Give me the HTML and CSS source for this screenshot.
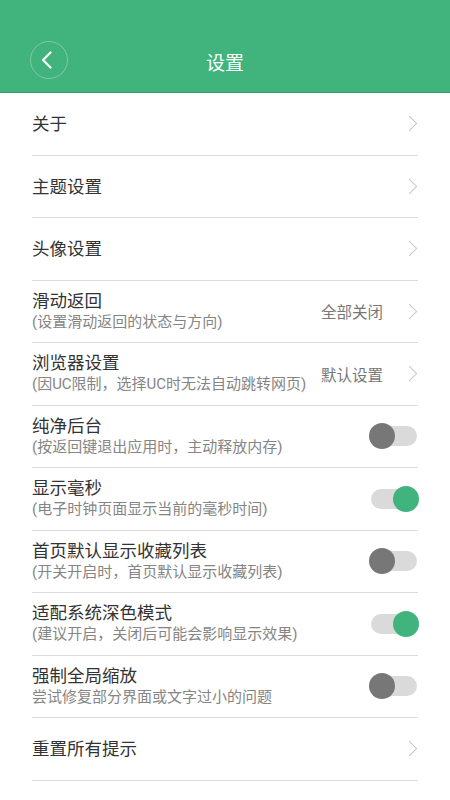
FILE: index.html
```html
<!DOCTYPE html>
<html lang="zh">
<head>
    <meta charset="UTF-8">
    <meta name="viewport" content="width=device-width, initial-scale=1.0">
    <title>设置</title>
    <link rel="stylesheet" href="styles.css">
</head>
<body>
    <div class="header">
        <div class="toolbar">
            <div class="back-btn">
                <svg width="38" height="38" viewBox="0 0 38 38">
                    <polyline points="20.5,11.5 13,19 20.5,26.5" fill="none" stroke="#fff" stroke-width="2.2" stroke-linecap="round" stroke-linejoin="round"/>
                </svg>
            </div>
            <h1>设置</h1>
        </div>
    </div>

    <div class="list">
        <div class="row single">
            <div class="text"><div class="title">关于</div></div>
            <span class="arrow"></span>
        </div>
        <div class="row single">
            <div class="text"><div class="title">主题设置</div></div>
            <span class="arrow"></span>
        </div>
        <div class="row single">
            <div class="text"><div class="title">头像设置</div></div>
            <span class="arrow"></span>
        </div>
        <div class="row">
            <div class="text">
                <div class="title">滑动返回</div>
                <div class="sub">(设置滑动返回的状态与方向)</div>
            </div>
            <span class="value">全部关闭</span>
            <span class="arrow"></span>
        </div>
        <div class="row">
            <div class="text">
                <div class="title">浏览器设置</div>
                <div class="sub">(因UC限制，选择UC时无法自动跳转网页)</div>
            </div>
            <span class="value">默认设置</span>
            <span class="arrow"></span>
        </div>
        <div class="row">
            <div class="text">
                <div class="title">纯净后台</div>
                <div class="sub">(按返回键退出应用时，主动释放内存)</div>
            </div>
            <div class="switch"><span class="track"></span><span class="knob"></span></div>
        </div>
        <div class="row">
            <div class="text">
                <div class="title">显示毫秒</div>
                <div class="sub">(电子时钟页面显示当前的毫秒时间)</div>
            </div>
            <div class="switch on"><span class="track"></span><span class="knob"></span></div>
        </div>
        <div class="row">
            <div class="text">
                <div class="title">首页默认显示收藏列表</div>
                <div class="sub">(开关开启时，首页默认显示收藏列表)</div>
            </div>
            <div class="switch"><span class="track"></span><span class="knob"></span></div>
        </div>
        <div class="row">
            <div class="text">
                <div class="title">适配系统深色模式</div>
                <div class="sub">(建议开启，关闭后可能会影响显示效果)</div>
            </div>
            <div class="switch on"><span class="track"></span><span class="knob"></span></div>
        </div>
        <div class="row">
            <div class="text">
                <div class="title">强制全局缩放</div>
                <div class="sub">尝试修复部分界面或文字过小的问题</div>
            </div>
            <div class="switch"><span class="track"></span><span class="knob"></span></div>
        </div>
        <div class="row single">
            <div class="text"><div class="title">重置所有提示</div></div>
            <span class="arrow"></span>
        </div>
    </div>
</body>
</html>
```

FILE: styles.css
```css
body {
    margin: 0;
    background-color: #fff;
    font-family: Roboto, "Noto Sans CJK SC", sans-serif;
    color: #333;
}

.header {
    background-color: #40b47c;
    padding-top: 30px;
    border-bottom: 1px solid #2f9e68;
}

.toolbar {
    height: 62px;
    display: flex;
    align-items: center;
    justify-content: center;
    position: relative;
}

.back-btn {
    position: absolute;
    left: 30px;
    top: 11px;
    width: 38px;
    height: 38px;
    box-sizing: border-box;
    border: 1px solid rgba(255, 255, 255, 0.3);
    border-radius: 50%;
    display: flex;
    align-items: center;
    justify-content: center;
}

.back-btn svg {
    flex: none;
}

.toolbar h1 {
    margin: 0;
    color: #fff;
    font-size: 19px;
    font-weight: normal;
}

.row {
    margin: 0 32px;
    height: 62.5px;
    box-sizing: border-box;
    border-bottom: 1px solid #dcdcdc;
    display: flex;
    align-items: center;
}

.row.single .text {
    padding-top: 2px;
}

.text {
    flex: 1;
    min-width: 0;
}

.title {
    font-size: 17.5px;
    line-height: 21px;
    color: #333;
}

.sub {
    font-size: 15px;
    line-height: 20px;
    color: #858585;
    white-space: nowrap;
}

.value {
    font-size: 15.5px;
    color: #777;
    margin-right: 21px;
}

.arrow {
    width: 11px;
    height: 11px;
    box-sizing: border-box;
    border-top: 1.5px solid #c6c6c6;
    border-right: 1.5px solid #c6c6c6;
    transform: rotate(45deg);
    margin-right: 3px;
}

.switch {
    position: relative;
    width: 50px;
    height: 26px;
    flex: none;
    margin-right: -1px;
}

.switch .track {
    position: absolute;
    left: 2px;
    right: 2px;
    top: 3px;
    bottom: 3px;
    border-radius: 10px;
    background-color: #dadada;
}

.switch .knob {
    position: absolute;
    left: 0;
    top: 0;
    width: 26px;
    height: 26px;
    border-radius: 50%;
    background-color: #777;
}

.switch.on .knob {
    left: auto;
    right: 0;
    background-color: #40b47c;
}
```
